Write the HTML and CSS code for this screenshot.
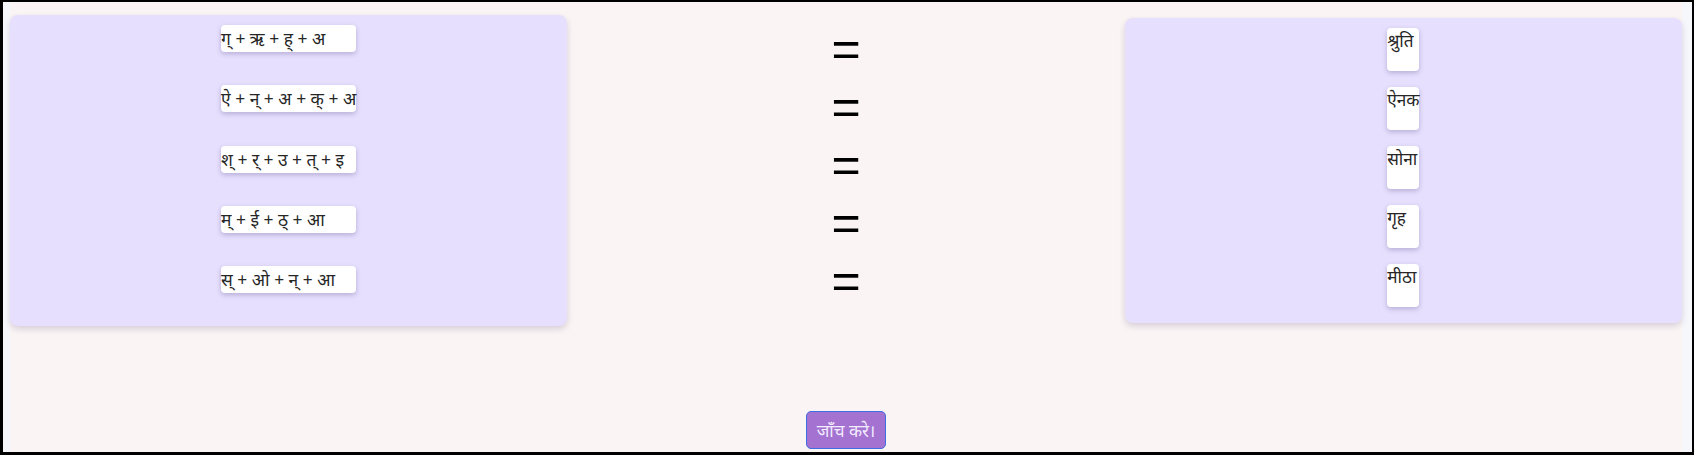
FILE: index.html
```html
<!DOCTYPE html>
<html lang="hi">
<head>
<meta charset="utf-8">
<title>मिलान करें</title>
<link rel="stylesheet" href="styles.css">
</head>
<body>
<div class="frame">
  <div class="inner">
    <div class="board">
      <div class="panel panel-left">
        <div class="list list-left">
          <div class="tile">ग् + ऋ + ह् + अ</div>
          <div class="tile">ऐ + न् + अ + क् + अ</div>
          <div class="tile">श् + र् + उ + त् + इ</div>
          <div class="tile">म् + ई + ठ् + आ</div>
          <div class="tile">स् + ओ + न् + आ</div>
        </div>
      </div>
      <div class="equals">
        <div class="eq">=</div>
        <div class="eq">=</div>
        <div class="eq">=</div>
        <div class="eq">=</div>
        <div class="eq">=</div>
      </div>
      <div class="panel panel-right">
        <div class="list list-right">
          <div class="word">श्रुति</div>
          <div class="word">ऐनक</div>
          <div class="word">सोना</div>
          <div class="word">गृह</div>
          <div class="word">मीठा</div>
        </div>
      </div>
    </div>
    <div class="actions">
      <button class="check" type="button">जाँच करे।</button>
    </div>
  </div>
</div>
</body>
</html>
```

FILE: styles.css
```css
* { box-sizing: border-box; }

html, body {
  margin: 0;
  padding: 0;
}

body {
  font-family: "Noto Sans", sans-serif;
  color: #262626;
  background: #f6f7fb;
}

.frame {
  width: 1694px;
  height: 455px;
  border-style: solid;
  border-color: #000;
  border-width: 2px 2px 3px 3px;
  background: #f6f7fb;
  padding: 0 10px 0 7px;
}

.inner {
  height: 100%;
  background: #faf4f4;
  display: flex;
  flex-direction: column;
}

.board {
  display: grid;
  grid-template-columns: 1fr 1fr 1fr;
  align-items: center;
  margin-top: 13px;
}

.panel {
  background: #e6dffd;
  border-radius: 8px;
  box-shadow: 0 3px 6px rgba(60, 40, 90, 0.18);
  display: flex;
  justify-content: center;
}

.panel-left {
  padding: 10px 0 0;
}

.panel-right {
  padding: 10px 0 0;
}

.list {
  display: flex;
  flex-direction: column;
  align-items: stretch;
}

.tile {
  background: #fff;
  border-radius: 4px;
  box-shadow: 0 2px 5px rgba(70, 50, 120, 0.28);
  font-size: 17.4px;
  line-height: 27px;
  height: 27px;
  white-space: nowrap;
  margin-bottom: 33.3px;
}

.word {
  background: #fff;
  border-radius: 4px;
  box-shadow: 0 2px 5px rgba(70, 50, 120, 0.28);
  font-size: 17.2px;
  line-height: 26px;
  height: 42.4px;
  white-space: nowrap;
  margin-bottom: 16.6px;
  min-width: 32px;
}

.equals {
  display: flex;
  flex-direction: column;
  align-items: center;
  padding-bottom: 11px;
}

.eq {
  font-family: "Liberation Sans", sans-serif;
  font-size: 50px;
  line-height: 58px;
  color: #000;
}

.actions {
  display: flex;
  justify-content: center;
  margin-top: 85px;
}

.check {
  width: 80px;
  height: 38px;
  background: #a473d1;
  color: #f3ecff;
  border: 1px solid #3d6fe3;
  border-radius: 5px;
  font-family: "Noto Sans", sans-serif;
  font-size: 17px;
  padding: 0;
}
```
